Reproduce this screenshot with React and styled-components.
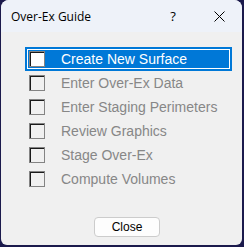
import React from "react";
import styled, { createGlobalStyle } from "styled-components";

const Global = createGlobalStyle`
  html, body { margin: 0; padding: 0; background: #1b1a4c; }
  body { width: 244px; height: 247px; overflow: hidden; }
`;

const Window = styled.div`
  margin-left: 1px;
  width: 241px;
  height: 245px;
  border-radius: 8px 8px 6px 6px;
  overflow: hidden;
  background: #f0f0f0;
  display: flex;
  flex-direction: column;
`;

const TitleBar = styled.div`
  height: 32px;
  flex: none;
  background: #eef2f9;
  display: flex;
  align-items: center;
  padding-left: 10px;
  font-family: "Open Sans", "Noto Sans", sans-serif;
  font-size: 12px;
  color: #000;
`;

const Title = styled.div`
  flex: 1;
`;

const TitleButton = styled.div`
  width: ${(p) => p.$w}px;
  height: 32px;
  display: flex;
  align-items: center;
  justify-content: center;
  font-size: 13px;
`;

const Body = styled.div`
  flex: 1;
  display: flex;
  flex-direction: column;
  padding: 15px 9px 8px 24px;
`;

const List = styled.div`
  display: flex;
  flex-direction: column;
  flex: 1;
`;

const Row = styled.div`
  height: 24px;
  width: 207px;
  box-sizing: border-box;
  display: flex;
  align-items: center;
  padding-left: 4px;
  gap: 16px;
  background: ${(p) => (p.$active ? "#0078d7" : "transparent")};
  box-shadow: ${(p) =>
    p.$active ? "inset 0 0 0 2px #0078d7, inset 0 0 0 3px #ffffff" : "none"};
  font-family: "Liberation Sans", Arial, sans-serif;
  font-size: 14px;
  color: ${(p) => (p.$active ? "#ffffff" : "#878787")};
`;

const Check = styled.div`
  width: 16px;
  height: 16px;
  box-sizing: border-box;
  border: 1px solid #838383;
  box-shadow: inset 1px 1px 0 #1a1a1a;
  background: ${(p) => (p.$active ? "#ffffff" : "#f0f0f0")};
  flex: none;
`;

const Footer = styled.div`
  display: flex;
  justify-content: center;
  padding-right: 4px;
`;

const Button = styled.button`
  width: 66px;
  height: 20px;
  box-sizing: border-box;
  border: 1px solid #cccccc;
  border-radius: 4px;
  background: #fdfdfd;
  font-family: "Liberation Sans", Arial, sans-serif;
  font-size: 12px;
  color: #000;
  padding: 0;
`;

const items = [
  "Create New Surface",
  "Enter Over-Ex Data",
  "Enter Staging Perimeters",
  "Review Graphics",
  "Stage Over-Ex",
  "Compute Volumes",
];

export default function App() {
  return (
    <>
      <Global />
      <Window>
        <TitleBar>
          <Title>Over-Ex Guide</Title>
          <TitleButton $w={46}>?</TitleButton>
          <TitleButton $w={46}>
            <svg width="11" height="11" viewBox="0 0 11 11">
              <path d="M0.5 0.5 L10.5 10.5 M10.5 0.5 L0.5 10.5" stroke="#000" strokeWidth="1" />
            </svg>
          </TitleButton>
        </TitleBar>
        <Body>
          <List>
            {items.map((t, i) => (
              <Row key={t} $active={i === 0}>
                <Check $active={i === 0} />
                <span>{t}</span>
              </Row>
            ))}
          </List>
          <Footer>
            <Button>Close</Button>
          </Footer>
        </Body>
      </Window>
    </>
  );
}
